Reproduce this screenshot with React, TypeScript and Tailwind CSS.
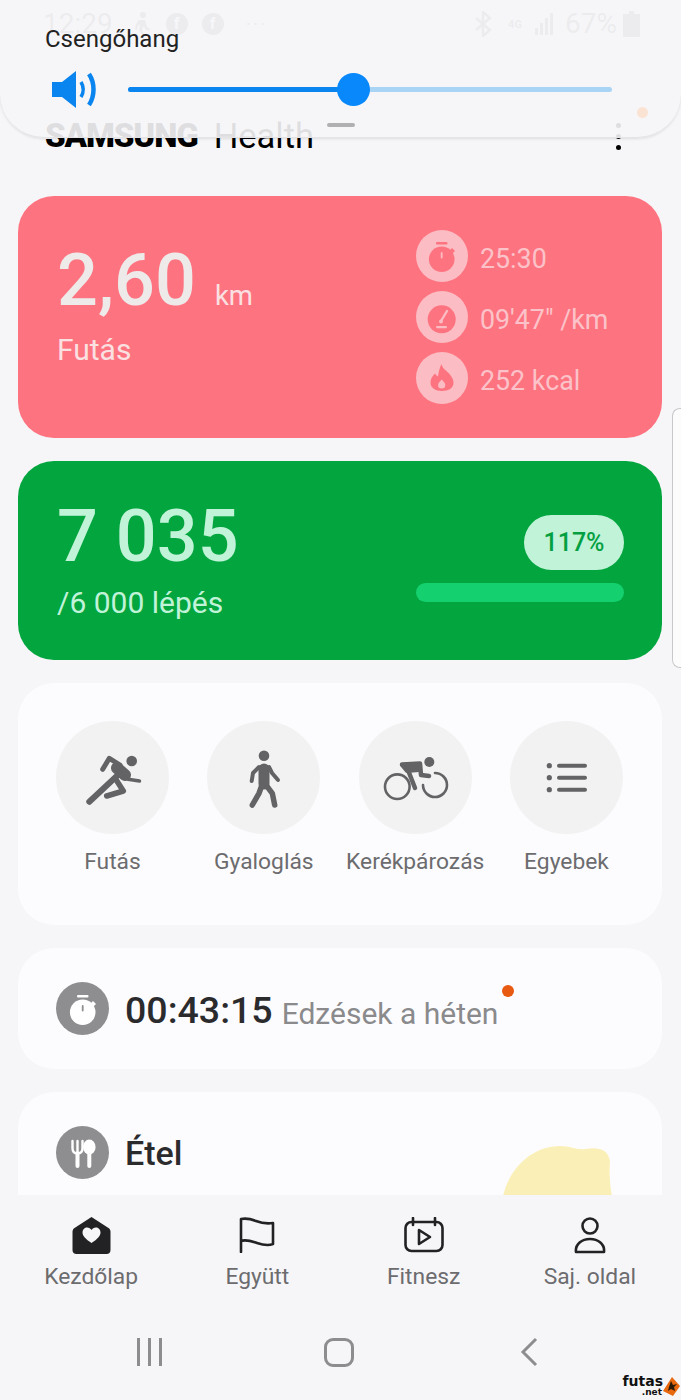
import React from "react";

const RED = "#fe7380";
const PALE = "#fbbcc3";

function Stopwatch({ fill, dot }: { fill: string; dot: string }) {
  return (
    <svg width="52" height="52" viewBox="0 0 52 52">
      <rect x="20" y="12" width="11.5" height="2.6" rx="1" fill={fill} />
      <circle cx="25.7" cy="29.3" r="12.8" fill={fill} />
      <path d="M33 21l3-3 3 3-3 3z" fill={fill} />
      <rect x="24.8" y="22" width="1.8" height="6.5" rx="0.9" fill={dot} />
    </svg>
  );
}

function Gauge() {
  return (
    <svg width="52" height="52" viewBox="0 0 52 52">
      <circle cx="25.7" cy="28.3" r="14" fill={RED} />
      <path d="M25 30l6-10" stroke={PALE} strokeWidth="2.4" strokeLinecap="round" />
      <circle cx="25" cy="30.5" r="2" fill={PALE} />
      <rect x="20" y="35" width="11" height="2.2" rx="1.1" fill={PALE} />
    </svg>
  );
}

function Flame() {
  return (
    <svg width="52" height="52" viewBox="0 0 52 52">
      <path
        d="M25.5 12c1 5 5 6.500 8 10 2.500 3 4 5.500 4 9 0 5-5 8-11.500 8s-11.500-3-11.500-8.500c0-4 2-6.500 4.500-9 1 1.500 2 2.500 3 3 .5-4 1.500-8.500 3.500-12.500z"
        fill={RED}
      />
      <path d="M25.700 27.500c1.800 2 3.600 3.500 3.600 5.500a3.600 3.600 0 0 1-7.200 0c0-2 1.800-3.500 3.600-5.500z" fill={PALE} />
    </svg>
  );
}

function Metric({ icon, text }: { icon: React.ReactNode; text: string }) {
  return (
    <div className="flex h-[52px] items-center gap-3">
      <div className="flex h-[52px] w-[52px] items-center justify-center rounded-full bg-[#fbbcc3]">{icon}</div>
      <span className="pt-[6px] text-[26.800px] leading-none whitespace-nowrap text-[#fbc3c9]">{text}</span>
    </div>
  );
}

function RunIcon() {
  return (
    <svg width="113" height="113" viewBox="0 0 113 113" fill="none" stroke="#636366" strokeLinecap="round" strokeLinejoin="round">
      <circle cx="75.700" cy="40" r="5.300" fill="#636366" stroke="none" />
      <path d="M46.700 48.300 53.300 37.300 64 44" strokeWidth="5" />
      <path d="M61 47 69 54" strokeWidth="12" />
      <path d="M63 53 33.300 80.700" strokeWidth="6" />
      <path d="M72 58.300 83.500 60" strokeWidth="3.500" />
      <path d="M59 57 67.300 70 50.700 75" strokeWidth="5.500" />
    </svg>
  );
}

function WalkIcon() {
  return (
    <svg width="113" height="113" viewBox="0 0 113 113" fill="none" stroke="#636366" strokeLinecap="round" strokeLinejoin="round">
      <circle cx="57" cy="34.700" r="5.300" fill="#636366" stroke="none" />
      <path d="M57 48 57 63" strokeWidth="11" />
      <path d="M52 46 46 52 44.700 60" strokeWidth="4" />
      <path d="M62 46 65 52 71 59" strokeWidth="4" />
      <path d="M55 64 52 72.300 45.300 84" strokeWidth="5.500" />
      <path d="M59 64 65.300 72.300 67.700 84" strokeWidth="5.500" />
    </svg>
  );
}

function BikeIcon() {
  return (
    <svg width="113" height="113" viewBox="0 0 113 113" fill="none" stroke="#636366" strokeLinecap="round" strokeLinejoin="round">
      <circle cx="70.300" cy="41" r="5" fill="#636366" stroke="none" />
      <circle cx="38.300" cy="65.700" r="12.300" strokeWidth="2.600" />
      <path d="M64 64a12 12 0 1 0 12-12" strokeWidth="2.600" />
      <path d="M43 43.500 61 42.500 62 54 70 55" strokeWidth="4.500" />
      <path d="M43 44 61 43 60 49 48 50z" fill="#636366" strokeWidth="4" />
      <path d="M49 49 56 67" strokeWidth="4.500" />
    </svg>
  );
}

function ListIcon() {
  return (
    <svg width="113" height="113" viewBox="0 0 113 113" fill="#636366" stroke="#636366" strokeLinecap="round">
      {[44.700, 56.700, 68.700].map((y) => (
        <g key={y}>
          <circle cx="39.300" cy={y} r="2.600" stroke="none" />
          <path d="M49 0H75" transform={`translate(0 ${y})`} strokeWidth="4" />
        </g>
      ))}
    </svg>
  );
}

function Shortcut({ icon, label }: { icon: React.ReactNode; label: string }) {
  return (
    <div className="flex w-[113px] flex-col items-center">
      <div className="h-[113px] w-[113px] rounded-full bg-[#f2f2f3]">{icon}</div>
      <span className="mt-[15px] text-[22.800px] leading-[26px] whitespace-nowrap text-[#6c6c6f]">{label}</span>
    </div>
  );
}

function CutleryIcon() {
  return (
    <svg width="53" height="53" viewBox="0 0 53 53" fill="none" stroke="#fff" strokeLinecap="round">
      <path d="M16.500 15v7c0 4 2 5.500 5 5.500s5-1.500 5-5.500v-7" strokeWidth="2.400" />
      <path d="M21.500 15v10" strokeWidth="2.400" />
      <path d="M21.500 27v13" strokeWidth="4" />
      <ellipse cx="33.300" cy="21" rx="6.300" ry="7.500" fill="#fff" stroke="none" />
      <path d="M33.300 27v13" strokeWidth="4" />
    </svg>
  );
}

function NavTab({ icon, label }: { icon: React.ReactNode; label: string }) {
  return (
    <div className="flex flex-col items-center">
      <div className="flex h-[40px] items-center justify-center">{icon}</div>
      <span className="mt-[9px] text-[22.800px] leading-[26px] whitespace-nowrap text-[#6c6c6f]">{label}</span>
    </div>
  );
}

function StatusBar() {
  return (
    <div className="flex h-[48px] items-center pl-[43px] pr-[41px] text-[#8a8a8a]">
      <span className="text-[28px] leading-none">12:29</span>
      <svg className="ml-[21px]" width="16" height="24" viewBox="0 0 16 24" fill="currentColor">
        <circle cx="9" cy="3" r="3" />
        <path d="M5 8l6 0 2 7 3 2-1 2-4-2-1-3-2 4 2 5H8l-3-5 1-6-2 2-1 4-2-1 1-5z" />
      </svg>
      {[0, 1].map((i) => (
        <span key={i} className={`${i === 0 ? "ml-[16px]" : "ml-[14px]"} flex h-[22px] w-[22px] items-center justify-center rounded-full bg-[#8a8a8a] text-[16px] leading-[20px] font-bold text-[#f6f6f8]`}>
          f
        </span>
      ))}
      <span className="ml-[22px] text-[20px] leading-none tracking-[2px]">···</span>
      <div className="ml-auto flex items-center">
        <svg width="20" height="26" viewBox="0 0 20 26" fill="none" stroke="currentColor" strokeWidth="2.400">
          <path d="M3 7l14 12-7 6V1l7 6L3 19" />
        </svg>
        <span className="ml-[14px] w-[16px] text-center text-[11px] leading-[11px] font-bold">4G</span>
        <svg className="ml-[12px]" width="18" height="22" viewBox="0 0 18 22" fill="currentColor">
          <rect x="0" y="15" width="3" height="7" />
          <rect x="5" y="10" width="3" height="12" />
          <rect x="10" y="5" width="3" height="17" />
          <rect x="15" y="0" width="3" height="22" />
        </svg>
        <span className="ml-[12px] text-[28px] leading-none">67%</span>
        <svg className="ml-[6px]" width="17" height="26" viewBox="0 0 17 26" fill="currentColor">
          <path d="M6 0h5v3h6v23H0V3h6z" />
        </svg>
      </div>
    </div>
  );
}

function VolumePanel() {
  return (
    <div className="absolute top-0 right-0 left-0 h-[138px] rounded-b-[44px] border-b border-[#e4e4e6] bg-[#f6f6f8]/[0.9] pt-[24px] shadow-[0_1px_3px_rgba(0,0,0,0.1)]">
      <div className="pl-[45px] text-[24px] leading-[30px] text-[#222]">Csengőhang</div>
      <div className="mt-[17px] flex items-center pl-[52px]">
        <svg width="47" height="37" viewBox="0 0 47 37" fill="#0a85ef">
          <path d="M0 11h10L24 0v37L10 26H0z" />
          <path d="M29 11c3 5 3 10 0 15" fill="none" stroke="#0a85ef" strokeWidth="3.500" />
          <path d="M37 3c6 9 6 22 0 31" fill="none" stroke="#0a85ef" strokeWidth="4.500" />
        </svg>
        <div className="relative ml-[29px] h-[5px] w-[484px] rounded-full bg-[#a9d4f5]">
          <div className="h-full w-[225px] rounded-full bg-[#0a85ef]" />
          <div className="absolute top-[-14px] left-[209px] h-[33px] w-[33px] rounded-full bg-[#0888fb]" />
        </div>
      </div>
      <div className="absolute top-[123px] left-[327px] h-[4px] w-[28px] rounded-full bg-[#b0b0b2]" />
      <div className="absolute top-[107px] left-[637px] h-[11px] w-[11px] rounded-full bg-[#fbe3d3]" />
    </div>
  );
}

export default function App() {
  return (
    <div className="relative flex h-[1400px] w-[681px] flex-col overflow-hidden bg-[#f6f6f8] [font-family:Roboto,sans-serif]">
      <header className="h-[196px] shrink-0">
        <StatusBar />
        <div className="mt-[70px] flex items-center pl-[45px]">
          <span className="text-[33px] leading-[36px] font-black tracking-[-1.100px] text-black">SAMSUNG</span>
          <span className="ml-[16px] text-[34.500px] leading-[36px] text-black">Health</span>
          <div className="ml-auto mr-[60px] flex flex-col gap-[6px]">
            <span className="h-[5px] w-[5px] rounded-full bg-black" />
            <span className="h-[5px] w-[5px] rounded-full bg-black" />
            <span className="h-[5px] w-[5px] rounded-full bg-black" />
          </div>
        </div>
      </header>

      <main className="flex h-[999px] shrink-0 flex-col gap-[23px] overflow-hidden pl-[18px] pr-[19px]">
        <section className="flex h-[242px] shrink-0 justify-between rounded-[36px] bg-[#fe7380] pl-[39px] pr-[38px]">
          <div className="pt-[43px]">
            <div className="flex items-baseline text-[#eeeaea]">
              <span className="text-[72px] leading-[84px] font-medium">2,60</span>
              <span className="ml-[19px] text-[27.500px] leading-none text-[#fbe0e2]">km</span>
            </div>
            <div className="mt-[10px] text-[30px] leading-[34px] text-[#fbe0e2]">Futás</div>
          </div>
          <div className="flex w-[208px] flex-col gap-[9px] pt-[34px]">
            <Metric icon={<Stopwatch fill={RED} dot={PALE} />} text="25:30" />
            <Metric icon={<Gauge />} text={'09\'47" /km'} />
            <Metric icon={<Flame />} text="252 kcal" />
          </div>
        </section>

        <section className="flex h-[199px] shrink-0 justify-between rounded-[36px] bg-[#03a53f] pt-[34px] pl-[39px] pr-[38px]">
          <div className="text-[#c1f3d8]">
            <div className="text-[72px] leading-[84px] font-medium whitespace-nowrap">7 035</div>
            <div className="mt-[7px] text-[30px] leading-[34px]">/6 000 lépés</div>
          </div>
          <div className="flex w-[208px] flex-col items-end pt-[20px]">
            <div className="flex h-[55px] w-[100px] items-center justify-center rounded-full bg-[#c1f3d8] text-[25px] font-medium text-[#03a042]">117%</div>
            <div className="mt-[13px] h-[19px] w-full rounded-full bg-[#14d06e]" />
          </div>
        </section>

        <section className="flex h-[242px] shrink-0 justify-between rounded-[36px] bg-[#fcfcfe] pl-[38px] pr-[39px] pt-[38px]">
          <Shortcut icon={<RunIcon />} label="Futás" />
          <Shortcut icon={<WalkIcon />} label="Gyaloglás" />
          <Shortcut icon={<BikeIcon />} label="Kerékpározás" />
          <Shortcut icon={<ListIcon />} label="Egyebek" />
        </section>

        <section className="relative flex h-[121px] shrink-0 items-center rounded-[36px] bg-[#fcfcfe] pl-[38px]">
          <div className="flex h-[53px] w-[53px] items-center justify-center rounded-full bg-[#8e8e90]">
            <Stopwatch fill="#fff" dot="#8e8e90" />
          </div>
          <span className="ml-[16px] pt-[5px] text-[37.500px] leading-none font-medium text-[#2b2b2e]">00:43:15</span>
          <span className="ml-[9px] pt-[11px] text-[30px] leading-none text-[#8a8a8c]">Edzések a héten</span>
          <span className="absolute top-[37px] left-[484px] h-[12px] w-[12px] rounded-full bg-[#e85a12]" />
        </section>

        <section className="relative h-[140px] shrink-0 overflow-hidden rounded-t-[36px] bg-[#fcfcfe] pt-[34px] pl-[38px]">
          <div className="flex items-center">
            <div className="h-[53px] w-[53px] rounded-full bg-[#8e8e90]">
              <CutleryIcon />
            </div>
            <span className="ml-[16px] text-[34px] leading-none font-medium text-[#2b2b2e]">Étel</span>
          </div>
          <svg className="absolute top-[54px] left-[484px]" width="110" height="50" viewBox="0 0 110 50" fill="#fbefb8">
            <path d="M1 50C8 20 32 0 58 0c10 0 16 4 26 3 12-2 22 0 24 12-1 12 0 24 2 35z" />
          </svg>
        </section>
      </main>

      <nav className="grid h-[105px] shrink-0 grid-cols-4 px-[8px] pt-[20px]">
        <NavTab
          label="Kezdőlap"
          icon={
            <svg width="39" height="38" viewBox="0 0 39 38" fill="#222225">
              <path d="M19.500 1l17 11c1.500 1 2 2 2 4v18c0 2.500-1.500 4-4 4H4.500C2 38 .5 36.500.5 34V16c0-2 .5-3 2-4z" />
              <path d="M19.500 27c-6-4-9-7-9-10.500 0-3 2.200-5 4.700-5 1.800 0 3.300 1 4.300 2.500 1-1.500 2.500-2.500 4.300-2.500 2.500 0 4.700 2 4.700 5 0 3.500-3 6.500-9 10.500z" fill="#f6f6f8" />
            </svg>
          }
        />
        <NavTab
          label="Együtt"
          icon={
            <svg width="36" height="36" viewBox="0 0 36 36" fill="none" stroke="#222225" strokeWidth="2.600" strokeLinejoin="round" strokeLinecap="round">
              <path d="M2 35V2c5-1 10 0 15 2s10 3 17 2v21c-5 2-10 1-16-1S7 22 2 24" />
            </svg>
          }
        />
        <NavTab
          label="Fitnesz"
          icon={
            <svg width="40" height="36" viewBox="0 0 40 36" fill="none" stroke="#222225" strokeWidth="2.600" strokeLinejoin="round">
              <rect x="1.500" y="5" width="37" height="29" rx="6" />
              <path d="M9 1v7M31 1v7" strokeLinecap="round" />
              <path d="M15 13l11 7-11 7z" />
            </svg>
          }
        />
        <NavTab
          label="Saj. oldal"
          icon={
            <svg width="32" height="37" viewBox="0 0 32 37" fill="none" stroke="#222225" strokeWidth="2.600" strokeLinejoin="round">
              <circle cx="16" cy="9" r="7.500" />
              <path d="M2 35c-1-8 6-13 14-13s15 5 14 13z" />
            </svg>
          }
        />
      </nav>

      <div className="grid h-[100px] shrink-0 grid-cols-[190px_190px_190px] pl-[54px] pt-[37px]">
        <div className="flex h-[30px] items-center justify-center gap-[8px]">
          <span className="h-[28px] w-[3px] bg-[#8d8d90]" />
          <span className="h-[28px] w-[3px] bg-[#8d8d90]" />
          <span className="h-[28px] w-[3px] bg-[#8d8d90]" />
        </div>
        <div className="flex h-[30px] items-center justify-center">
          <span className="h-[29px] w-[30px] rounded-[9px] border-[3px] border-[#8d8d90]" />
        </div>
        <div className="flex h-[30px] items-center justify-center">
          <svg width="18" height="30" viewBox="0 0 18 30" fill="none" stroke="#8d8d90" strokeWidth="3">
            <path d="M16 2 3 15l13 13" />
          </svg>
        </div>
      </div>

      <VolumePanel />

      {/* edge panel handle */}
      <div className="absolute top-[408px] right-0 h-[260px] w-[9px] rounded-l-[8px] border border-r-0 border-[#c8c8ca] bg-[#fcfcfd]" />

      {/* site watermark */}
      <div className="absolute right-[1px] bottom-[3px] flex items-center">
        <div className="flex flex-col items-end text-[#111] [font-family:'DejaVu_Sans',sans-serif]">
          <span className="text-[14px] leading-[13px] font-black">futas</span>
          <span className="mr-[1px] text-[9px] leading-[9px] font-black">.net</span>
        </div>
        <svg width="17" height="19" viewBox="0 0 17 19">
          <path d="M9 0l8 9-7 10-10-5z" fill="#e8690f" />
          <path d="M8 4l2 4 4-1-3 3 1 4-4-2-3 2 1-4z" fill="#2a1a08" />
        </svg>
      </div>
    </div>
  );
}
